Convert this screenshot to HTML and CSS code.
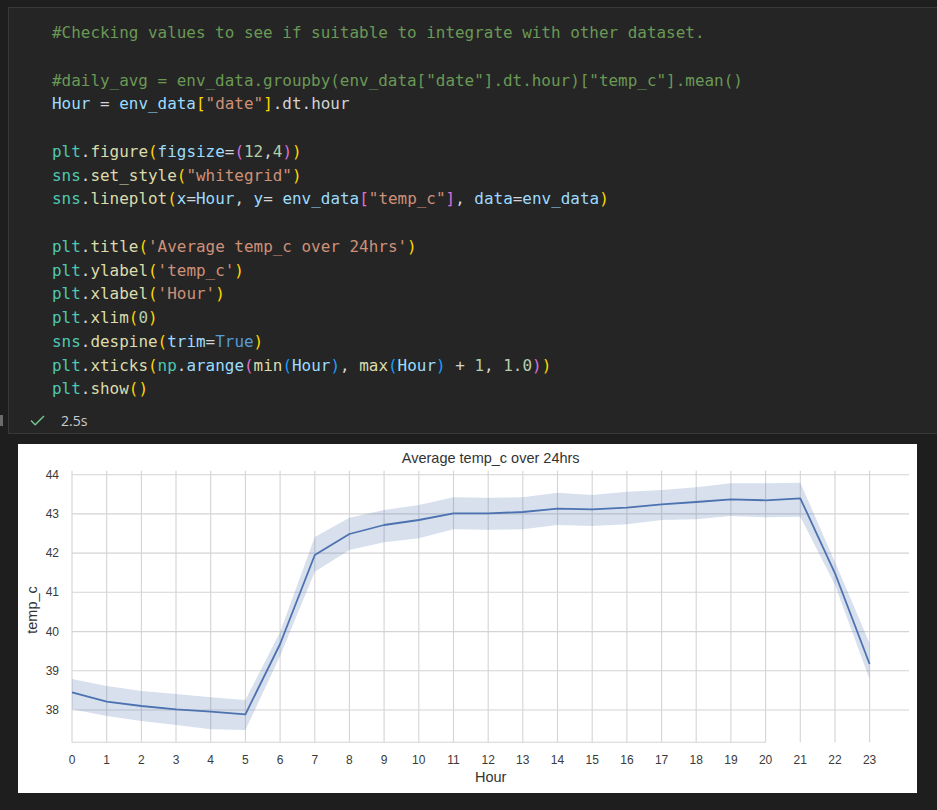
FILE: index.html
```html
<!DOCTYPE html>
<html>
<head>
<meta charset="utf-8">
<link rel="stylesheet" href="styles.css">
</head>
<body>
<div class="cell">
<pre class="code"><span class="c">#Checking values to see if suitable to integrate with other dataset.</span>

<span class="c">#daily_avg = env_data.groupby(env_data["date"].dt.hour)["temp_c"].mean()</span>
<span class="v">Hour</span> = <span class="v">env_data</span><span class="b1">[</span><span class="s">"date"</span><span class="b1">]</span>.dt.hour

<span class="m">plt</span>.<span class="f">figure</span><span class="b1">(</span><span class="v">figsize</span>=<span class="b2">(</span><span class="n">12</span>,<span class="n">4</span><span class="b2">)</span><span class="b1">)</span>
<span class="m">sns</span>.<span class="f">set_style</span><span class="b1">(</span><span class="s">"whitegrid"</span><span class="b1">)</span>
<span class="m">sns</span>.<span class="f">lineplot</span><span class="b1">(</span><span class="v">x</span>=<span class="v">Hour</span>, <span class="v">y</span>= <span class="v">env_data</span><span class="b2">[</span><span class="s">"temp_c"</span><span class="b2">]</span>, <span class="v">data</span>=<span class="v">env_data</span><span class="b1">)</span>

<span class="m">plt</span>.<span class="f">title</span><span class="b1">(</span><span class="s">'Average temp_c over 24hrs'</span><span class="b1">)</span>
<span class="m">plt</span>.<span class="f">ylabel</span><span class="b1">(</span><span class="s">'temp_c'</span><span class="b1">)</span>
<span class="m">plt</span>.<span class="f">xlabel</span><span class="b1">(</span><span class="s">'Hour'</span><span class="b1">)</span>
<span class="m">plt</span>.<span class="f">xlim</span><span class="b1">(</span><span class="n">0</span><span class="b1">)</span>
<span class="m">sns</span>.<span class="f">despine</span><span class="b1">(</span><span class="v">trim</span>=<span class="k">True</span><span class="b1">)</span>
<span class="m">plt</span>.<span class="f">xticks</span><span class="b1">(</span><span class="m">np</span>.<span class="v">arange</span><span class="b2">(</span><span class="f">min</span><span class="b3">(</span><span class="v">Hour</span><span class="b3">)</span>, <span class="f">max</span><span class="b3">(</span><span class="v">Hour</span><span class="b3">)</span> + <span class="n">1</span>, <span class="n">1.0</span><span class="b2">)</span><span class="b1">)</span>
<span class="m">plt</span>.<span class="f">show</span><span class="b1">()</span></pre>
  <div class="status">
    <span class="run-indicator"></span>
    <svg class="check" width="15" height="11" viewBox="0 0 15 11"><path d="M1 5.4 L5.2 9.8 L14 1" fill="none" stroke="#73c991" stroke-width="1.4"/></svg>
    <span class="time">2.5s</span>
  </div>
</div>
<div class="output">
<svg class="chart" width="899" height="349" viewBox="0 0 899 349">
  <rect width="899" height="349" fill="#ffffff"/>
  <g stroke="#d4d4d4" stroke-width="1.1">
    <line x1="54" y1="30.7" x2="891" y2="30.7"/>
    <line x1="54" y1="69.9" x2="891" y2="69.9"/>
    <line x1="54" y1="109.1" x2="891" y2="109.1"/>
    <line x1="54" y1="148.3" x2="891" y2="148.3"/>
    <line x1="54" y1="187.6" x2="891" y2="187.6"/>
    <line x1="54" y1="226.8" x2="891" y2="226.8"/>
    <line x1="54" y1="266" x2="891" y2="266"/>
    <line x1="54" y1="26.7" x2="54" y2="298.3"/>
    <line x1="88.7" y1="26.7" x2="88.7" y2="298.3"/>
    <line x1="123.4" y1="26.7" x2="123.4" y2="298.3"/>
    <line x1="158" y1="26.7" x2="158" y2="298.3"/>
    <line x1="192.7" y1="26.7" x2="192.7" y2="298.3"/>
    <line x1="227.4" y1="26.7" x2="227.4" y2="298.3"/>
    <line x1="262.1" y1="26.7" x2="262.1" y2="298.3"/>
    <line x1="296.8" y1="26.7" x2="296.8" y2="298.3"/>
    <line x1="331.4" y1="26.7" x2="331.4" y2="298.3"/>
    <line x1="366.1" y1="26.7" x2="366.1" y2="298.3"/>
    <line x1="400.8" y1="26.7" x2="400.8" y2="298.3"/>
    <line x1="435.5" y1="26.7" x2="435.5" y2="298.3"/>
    <line x1="470.2" y1="26.7" x2="470.2" y2="298.3"/>
    <line x1="504.8" y1="26.7" x2="504.8" y2="298.3"/>
    <line x1="539.5" y1="26.7" x2="539.5" y2="298.3"/>
    <line x1="574.2" y1="26.7" x2="574.2" y2="298.3"/>
    <line x1="608.9" y1="26.7" x2="608.9" y2="298.3"/>
    <line x1="643.6" y1="26.7" x2="643.6" y2="298.3"/>
    <line x1="678.2" y1="26.7" x2="678.2" y2="298.3"/>
    <line x1="712.9" y1="26.7" x2="712.9" y2="298.3"/>
    <line x1="747.6" y1="26.7" x2="747.6" y2="298.3"/>
    <line x1="782.3" y1="26.7" x2="782.3" y2="298.3"/>
    <line x1="817" y1="26.7" x2="817" y2="298.3"/>
    <line x1="851.6" y1="26.7" x2="851.6" y2="298.3"/>
    <line x1="54" y1="298.3" x2="747.6" y2="298.3"/>
  </g>
  <polygon fill="#4c72b0" fill-opacity="0.22" points="54,235 88.7,242 123.4,247 158,250 192.7,253.3 227.4,256 262.1,188 296.8,93 331.4,73.7 366.1,66 400.8,61 435.5,53.3 470.2,53.7 504.8,53.3 539.5,48.7 574.2,51 608.9,47.7 643.6,46 678.2,43.3 712.9,39.3 747.6,39.3 782.3,38.7 817,118 851.6,199.3 851.6,235.3 817,141 782.3,72.7 747.6,73.3 712.9,72 678.2,75.3 643.6,76 608.9,80.3 574.2,82 539.5,81 504.8,85.3 470.2,85.7 435.5,85.3 400.8,94.3 366.1,98.3 331.4,106 296.8,127.7 262.1,212 227.4,286 192.7,285.3 158,281 123.4,277 88.7,272 54,265.3"/>
  <polyline fill="none" stroke="#4c72b0" stroke-width="1.8" stroke-linejoin="round" points="54,248.3 88.7,257.7 123.4,262 158,265.3 192.7,267.7 227.4,270.3 262.1,200 296.8,111 331.4,90 366.1,81 400.8,76 435.5,69.3 470.2,69.3 504.8,68 539.5,64.7 574.2,65.3 608.9,63.7 643.6,60.3 678.2,58 712.9,55.3 747.6,56.3 782.3,54.3 817,129.3 851.6,220"/>
  <g class="ticks ytick">
    <text x="41" y="30.7">44</text>
    <text x="41" y="69.9">43</text>
    <text x="41" y="109.1">42</text>
    <text x="41" y="148.3">41</text>
    <text x="41" y="187.6">40</text>
    <text x="41" y="226.8">39</text>
    <text x="41" y="266">38</text>
  </g>
  <g class="ticks xtick">
    <text x="54" y="316">0</text>
    <text x="88.7" y="316">1</text>
    <text x="123.4" y="316">2</text>
    <text x="158" y="316">3</text>
    <text x="192.7" y="316">4</text>
    <text x="227.4" y="316">5</text>
    <text x="262.1" y="316">6</text>
    <text x="296.8" y="316">7</text>
    <text x="331.4" y="316">8</text>
    <text x="366.1" y="316">9</text>
    <text x="400.8" y="316">10</text>
    <text x="435.5" y="316">11</text>
    <text x="470.2" y="316">12</text>
    <text x="504.8" y="316">13</text>
    <text x="539.5" y="316">14</text>
    <text x="574.2" y="316">15</text>
    <text x="608.9" y="316">16</text>
    <text x="643.6" y="316">17</text>
    <text x="678.2" y="316">18</text>
    <text x="712.9" y="316">19</text>
    <text x="747.6" y="316">20</text>
    <text x="782.3" y="316">21</text>
    <text x="817" y="316">22</text>
    <text x="851.6" y="316">23</text>
  </g>
  <text class="label" x="472.7" y="332.5">Hour</text>
  <text class="label" x="14" y="166" transform="rotate(-90 14 166)">temp_c</text>
  <text class="title" x="472.7" y="14">Average temp_c over 24hrs</text>
</svg>
</div>
</body>
</html>
```
FILE: styles.css
```css
html, body {
  margin: 0;
  padding: 0;
  background: #1e1e1e;
}
body {
  width: 937px;
  height: 810px;
  overflow: hidden;
  padding-top: 7px;
  box-sizing: border-box;
}
.cell {
  margin-left: 8px;
  background: #252526;
  border: 1px solid #383838;
  border-right: none;
  height: 427px;
  box-sizing: border-box;
  display: flex;
  flex-direction: column;
}
.code {
  margin: 0;
  padding: 13px 0 0 43px;
  font-family: "DejaVu Sans Mono", "Liberation Mono", monospace;
  font-size: 15.95px;
  line-height: 23.75px;
  color: #d4d4d4;
  white-space: pre;
}
.c { color: #6a9955; }
.v { color: #9cdcfe; }
.m { color: #4ec9b0; }
.f { color: #dcdcaa; }
.s { color: #ce9178; }
.n { color: #b5cea8; }
.k { color: #569cd6; }
.b1 { color: #ffd700; }
.b2 { color: #da70d6; }
.b3 { color: #179fff; }
.status {
  display: flex;
  align-items: center;
  height: 22px;
  margin-top: 8px;
}
.run-indicator {
  width: 3px;
  height: 11px;
  margin-left: -9px;
  background: #6b6b6b;
}
.check {
  margin-left: 27px;
}
.time {
  margin-left: 16px;
  font-family: "Open Sans", "Noto Sans", sans-serif;
  font-size: 14px;
  color: #cccccc;
}
.output {
  margin: 10px 0 0 18px;
  width: 899px;
  height: 349px;
}
.chart {
  display: block;
}
.ticks text {
  font-family: "Liberation Sans", Arial, sans-serif;
  font-size: 12px;
  fill: #3a3a3a;
  dominant-baseline: central;
}
.ytick text {
  text-anchor: end;
}
.xtick text {
  text-anchor: middle;
}
.label, .title {
  font-family: "Liberation Sans", Arial, sans-serif;
  font-size: 14.5px;
  fill: #333333;
  text-anchor: middle;
  dominant-baseline: central;
}
```
